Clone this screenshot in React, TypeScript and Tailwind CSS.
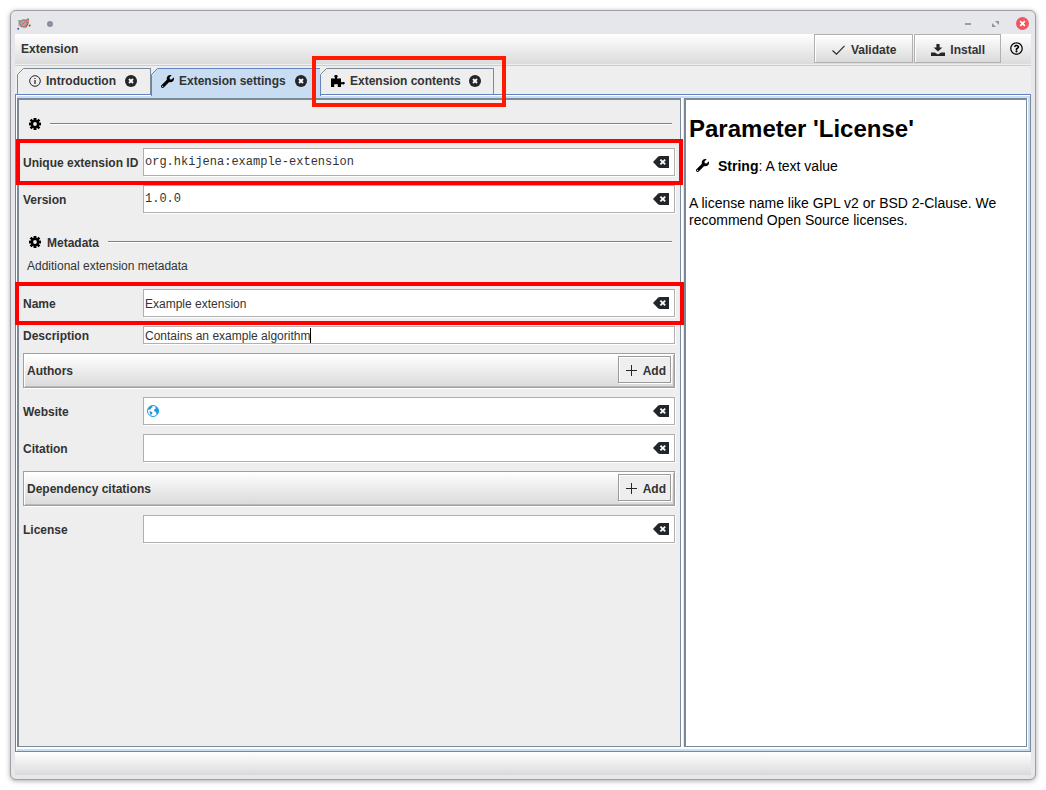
import React, { useState } from "react";
import type { ReactNode } from "react";
import { FaWrench, FaRegQuestionCircle } from "react-icons/fa";

function GearIcon() {
  return (
    <svg viewBox="0 0 24 24" className="size-3 shrink-0" fill="#000" aria-hidden="true">
      <rect x="9" y="0" width="6" height="24" rx="1" />
      <rect x="0" y="9" width="24" height="6" rx="1" />
      <rect x="9.4" y="-0.5" width="5.2" height="25" transform="rotate(45 12 12)" />
      <rect x="9.4" y="-0.5" width="5.2" height="25" transform="rotate(-45 12 12)" />
      <circle cx="12" cy="12" r="8.4" />
      <circle cx="12" cy="12" r="3.8" fill="#eee" />
    </svg>
  );
}

function PuzzleIcon() {
  return (
    <svg viewBox="0 0 14 13" className="h-[13px] w-[14px] shrink-0" fill="#000" aria-hidden="true">
      <path d="M0 3.5H4V2.7A1.6 1.6 0 1 1 6 2.7V3.5H10V7.2H11.6A1.3 1.3 0 1 1 11.6 9.2H10V12H6.8V9.2H3.2V12H0Z" />
    </svg>
  );
}

function InfoIcon() {
  return (
    <svg viewBox="0 0 12 12" className="size-3 shrink-0" fill="none" stroke="#222" aria-hidden="true">
      <circle cx="6" cy="6" r="5.3" />
      <path d="M6 5V9M6 3V4" strokeWidth="1.2" />
    </svg>
  );
}

function CloseIcon() {
  return (
    <svg viewBox="0 0 12 12" className="size-3" aria-hidden="true">
      <circle cx="6" cy="6" r="6" fill="#232629" />
      <path d="M4 4L8 8M8 4L4 8" stroke="#fff" strokeWidth="1.8" />
    </svg>
  );
}

function ClearIcon() {
  return (
    <svg viewBox="0 0 16 12" className="h-3 w-4" aria-hidden="true">
      <path d="M0 6L5 0.8Q5.8 0 7 0H16V12H7Q5.8 12 5 11.2Z" fill="#232629" />
      <path d="M7.4 3.6L12.2 8.4M12.2 3.6L7.4 8.4" stroke="#fff" strokeWidth="1.8" />
    </svg>
  );
}

function GlobeIcon() {
  return (
    <svg viewBox="0 0 12 12" className="size-3 shrink-0" aria-hidden="true">
      <circle cx="6" cy="6" r="5.5" fill="#fff" stroke="#1d99e3" />
      <path
        d="M0.8 4.6L2.4 1.8L5 0.8L5.6 2.2L4.2 3L3.8 4.2L2.4 4.8Z M2.4 6L5.2 7L5.4 8.4L4.4 9.6L4.2 11L3 8.6Z M7 4.8L8.8 3.6L8.4 2L9.8 1.8L11.5 5V7.5L10 9.6L9.2 8.6V7L7.4 6.4Z"
        fill="#1d99e3"
      />
    </svg>
  );
}

function PlusIcon() {
  return (
    <svg viewBox="0 0 11 11" className="size-[11px]" stroke="#232629" shapeRendering="crispEdges" aria-hidden="true">
      <path d="M5.5 0V11M0 5.5H11" />
    </svg>
  );
}

function CheckIcon() {
  return (
    <svg viewBox="0 0 13 10" className="h-[10px] w-[13px]" fill="none" stroke="#232629" strokeWidth="1.1" aria-hidden="true">
      <path d="M0.5 5.5L4.5 9.2L12.5 0.8" />
    </svg>
  );
}

function InstallIcon() {
  return (
    <svg viewBox="0 0 14 12" className="h-3 w-[14px]" fill="#232629" aria-hidden="true">
      <path d="M5.4 0H8.6V3.6H11.4L7 7.6L2.6 3.6H5.4Z" />
      <path d="M0 8.4H3.9L7 10.4L10.1 8.4H14V12H0Z" />
    </svg>
  );
}

function AppIcon() {
  return (
    <svg viewBox="0 0 14 12" className="h-3 w-[14px]" aria-hidden="true">
      <path d="M1.5 3.5L6 1.2L11 0.8L11.6 5L8.5 10.5L4.5 9.5L1.2 7.5Z" fill="#dba59d" />
      <ellipse cx="6.4" cy="5.4" rx="3.8" ry="3.4" fill="#a8aaa6" stroke="#8f7a76" />
      <path d="M4.6 7L8 3.8" stroke="#d0605a" fill="none" />
      <path d="M9.5 2L11.2 1.2L11 5.5L9 9.5" stroke="#e0453c" fill="none" />
      <circle cx="1.2" cy="10.8" r="1" fill="#3d4fc4" />
      <circle cx="12.6" cy="7.4" r="1" fill="#555" />
      <circle cx="2" cy="2.8" r="0.9" fill="#4ca66a" />
      <circle cx="11.4" cy="1" r="0.8" fill="#4ca66a" />
    </svg>
  );
}

function Tab({
  icon,
  label,
  className,
  selected = false,
  highlighted = false,
}: {
  icon: ReactNode;
  label: string;
  className: string;
  selected?: boolean;
  highlighted?: boolean;
}) {
  return (
    <div
      className={`relative flex items-start justify-between border-t ${className} ${
        selected ? "-mb-0.5 h-7 border-x border-[#6382bf] bg-[#c8ddf2]" : "h-[26px] border-r border-[#7a8a99] bg-[#eee]"
      } ${highlighted ? "z-20" : "border-l"}`}
    >
      <svg viewBox="0 0 7 7" className="absolute -top-px -left-px size-[7px]" aria-hidden="true">
        <path d="M0 0H7L0 7Z" fill="#eee" />
        <path d="M0.5 6.5L6.5 0.5" stroke={selected ? "#6382bf" : "#7a8a99"} />
      </svg>
      <button type="button" role="tab" aria-selected={selected} className="flex h-6 items-center gap-[5px] whitespace-nowrap">
        {icon}
        {label}
      </button>
      <button type="button" aria-label={`Close ${label}`} className="flex h-[23px] items-center">
        <CloseIcon />
      </button>
      {highlighted && <div className="pointer-events-none absolute -top-[13px] -right-[13px] -bottom-[13px] -left-[9px] border-4 border-[#ff1a00]" />}
    </div>
  );
}

function Field({
  id,
  label,
  initial = "",
  mono = false,
  icon,
  highlight,
}: {
  id: string;
  label: string;
  initial?: string;
  mono?: boolean;
  icon?: ReactNode;
  highlight?: string;
}) {
  const [value, setValue] = useState(initial);
  return (
    <div className="relative flex items-center">
      <label htmlFor={id} className="w-[120px] shrink-0 pt-px font-bold whitespace-nowrap">
        {label}
      </label>
      <div className="flex h-7 min-w-0 flex-1 items-center border border-[#afafaf] bg-white pr-[5px] pl-px shadow-[1px_1px_0_#fff]">
        {icon && <span className="pl-[2px]">{icon}</span>}
        <input
          id={id}
          value={value}
          onChange={(e) => setValue(e.target.value)}
          className={`h-full min-w-0 flex-1 bg-transparent outline-none ${mono ? "pb-px font-['Liberation_Mono',monospace]" : "pt-px"}`}
        />
        <button type="button" aria-label={`Clear ${label}`} onClick={() => setValue("")}>
          <ClearIcon />
        </button>
      </div>
      {highlight && <div className={`pointer-events-none absolute z-10 border-4 border-[#ff0000] ${highlight}`} />}
    </div>
  );
}

function ListHeader({ label }: { label: string }) {
  return (
    <div className="flex h-[35px] items-start justify-between border border-[#a0a0a0] bg-linear-to-b from-white to-[#dadada] pt-[2px] pr-[3px] pl-[3px] shadow-[inset_1px_1px_0_#fff,inset_-1px_-1px_0_#b8b8b8,1px_1px_0_#fff]">
      <span className="pt-[7px] font-bold">{label}</span>
      <button
        type="button"
        className="flex h-[27px] items-center gap-[6px] border border-[#999] bg-[#eee] pt-[2px] pr-[4px] pl-[7px] font-bold shadow-[inset_1px_1px_0_#fff,1px_1px_0_#fff]"
      >
        <PlusIcon />
        <span className="pt-px">Add</span>
      </button>
    </div>
  );
}

function GroupTitle({ label }: { label?: string }) {
  return (
    <div className="flex h-5 items-center pr-[3px] pl-[6px]">
      <GearIcon />
      {label && <h2 className="ml-[6px] pt-px font-bold">{label}</h2>}
      <div className="-mt-px ml-[9px] h-[2px] flex-1 border-b border-b-white bg-[#6382bf]" />
    </div>
  );
}

export default function App() {
  const toolButton =
    "flex h-[29px] items-center border border-[#b0b0b0] bg-linear-to-b from-white to-[#dadada] pt-[2px] font-bold shadow-[inset_1px_1px_0_#fff]";
  return (
    <div className="flex min-h-screen flex-col bg-white p-[10px] font-['Liberation_Sans',Arial,sans-serif] text-xs leading-4 text-[#333]">
      <div className="flex flex-1 flex-col rounded-md border border-[#a0a0a0] bg-[#e6e7eb] px-1 pb-1 shadow-[0_1px_5px_rgba(0,0,0,0.35)]">
        <header className="flex h-[23px] shrink-0 items-center px-[2px] pt-[2px]">
          <AppIcon />
          <span className="ml-4 size-[6px] rounded-full bg-[#8b8e9b]" />
          <div className="ml-auto flex items-center gap-[17px]">
            <button type="button" aria-label="Minimize" className="h-[2px] w-[6px] bg-[#9a9da8]" />
            <button type="button" aria-label="Restore" className="pl-1">
              <svg viewBox="0 0 7 6" className="h-[6px] w-[7px]" fill="#8f929f" aria-hidden="true">
                <path d="M3 0H7V4ZM0 2L4 6H0Z" />
              </svg>
            </button>
            <button type="button" aria-label="Close window">
              <svg viewBox="0 0 13 13" className="size-[13px]" aria-hidden="true">
                <circle cx="6.5" cy="6.5" r="6.5" fill="#f25460" />
                <path d="M4.2 4.2L8.8 8.8M8.8 4.2L4.2 8.8" stroke="#fff" strokeWidth="1.8" />
              </svg>
            </button>
          </div>
        </header>

        <div className="flex h-8 shrink-0 items-start gap-px border-b border-[#ccc] bg-linear-to-b from-white to-[#dadada] shadow-[inset_0_-1px_0_#eee]">
          <h1 className="flex-1 pt-[7px] pl-[6px] font-bold">Extension</h1>
          <button type="button" className={`${toolButton} gap-[6px] pr-4 pl-[17px]`}>
            <CheckIcon />
            Validate
          </button>
          <button type="button" className={`${toolButton} gap-[5px] pr-[15px] pl-4`}>
            <InstallIcon />
            Install
          </button>
          <button type="button" aria-label="Help" className="flex h-[29px] w-[29px] items-center justify-center pr-px text-black">
            <FaRegQuestionCircle className="size-[13px]" />
          </button>
        </div>

        <div role="tablist" className="relative z-20 flex h-7 shrink-0 items-start bg-[#eee] pt-[2px] pl-[2px] font-bold">
          <Tab icon={<InfoIcon />} label="Introduction" className="w-[134px] pr-[13px] pl-[11px]" />
          <Tab icon={<FaWrench className="size-[13px] text-black" />} label="Extension settings" className="w-[170px] pr-[13px] pl-[9px]" selected />
          <Tab icon={<PuzzleIcon />} label="Extension contents" className="w-[173px] pr-3 pl-[10px]" highlighted />
        </div>

        <main className="flex flex-1 border border-[#6382bf] border-r-[#7a8a99] border-b-[#7a8a99] bg-white pt-px pl-px">
          <div className="flex flex-1 border-t-2 border-r-2 border-b-2 border-[#c8ddf2] bg-white pr-px pb-[2px]">
            <form
              onSubmit={(e) => e.preventDefault()}
              className="flex min-w-0 flex-1 flex-col gap-[9px] border-t-2 border-r border-b border-l-2 border-[#7a8a99] bg-[#eee] pr-[5px] pl-1"
            >
              <div className="h-[39px] pt-[14px]">
                <GroupTitle />
              </div>
              <Field
                id="extension-id"
                label="Unique extension ID"
                initial="org.hkijena:example-extension"
                mono
                highlight="-inset-y-[9px] -left-[7px] -right-2"
              />
              <Field id="version" label="Version" initial="1.0.0" mono />
              <div className="h-[58px] pt-[10px]">
                <GroupTitle label="Metadata" />
                <p className="pt-[6px] pl-1">Additional extension metadata</p>
              </div>
              <Field id="name" label="Name" initial="Example extension" highlight="-top-[7px] -bottom-2 -left-2 -right-[9px]" />
              <div className="flex items-center">
                <label htmlFor="description" className="w-[120px] shrink-0 pt-px font-bold">
                  Description
                </label>
                <div className="flex h-[18px] flex-1 items-center border border-[#afafaf] bg-white pl-px shadow-[1px_1px_0_#fff]">
                  <input
                    id="description"
                    defaultValue="Contains an example algorithm"
                    className="field-sizing-content h-4 bg-transparent pt-px outline-none"
                  />
                  <span className="h-[15px] w-px bg-black" />
                </div>
              </div>
              <ListHeader label="Authors" />
              <Field id="website" label="Website" icon={<GlobeIcon />} />
              <Field id="citation" label="Citation" />
              <ListHeader label="Dependency citations" />
              <Field id="license" label="License" />
            </form>
            <div className="w-[3px] shrink-0 border-r border-[#dce8f4] bg-white" />
            <aside className="w-[343px] shrink-0 border-t-2 border-r border-b border-l-2 border-[#7a8a99] bg-white px-[3px] text-sm leading-[17px] text-black">
              <h2 className="pt-[14px] text-2xl leading-[30px] font-bold">Parameter 'License'</h2>
              <p className="mt-[14px] flex items-start pl-[7px]">
                <FaWrench className="mt-px mr-[9px] size-[13px]" />
                <span>
                  <b>String</b>: A text value
                </span>
              </p>
              <p className="mt-5">A license name like GPL v2 or BSD 2-Clause. We recommend Open Source licenses.</p>
            </aside>
          </div>
        </main>

        <footer className="h-[23px] shrink-0 bg-linear-to-b from-white to-[#dadada]" />
      </div>
    </div>
  );
}
